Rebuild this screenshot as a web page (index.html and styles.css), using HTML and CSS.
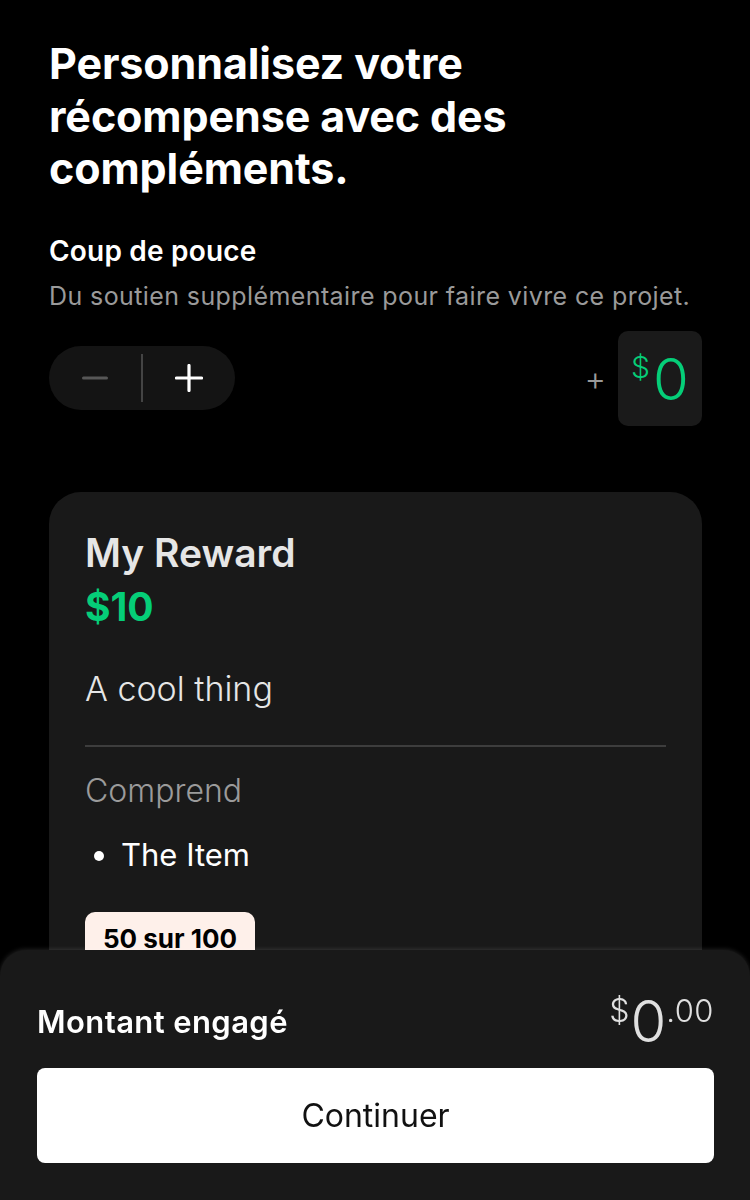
FILE: index.html
```html
<!DOCTYPE html>
<html lang="fr">
<head>
<meta charset="utf-8">
<title>Compléments</title>
<link rel="stylesheet" href="styles.css">
</head>
<body>
<main class="page">
  <h1 class="title">Personnalisez votre récompense avec des compléments.</h1>

  <section class="boost">
    <h2 class="boost-title">Coup de pouce</h2>
    <p class="boost-sub">Du soutien supplémentaire pour faire vivre ce projet.</p>
    <div class="boost-row">
      <div class="stepper">
        <button class="step step-minus" aria-label="moins">
          <svg width="26" height="26" viewBox="0 0 26 26"><path d="M1.5 13h23" stroke="#575757" stroke-width="3" stroke-linecap="round"/></svg>
        </button>
        <span class="step-divider"></span>
        <button class="step step-plus" aria-label="plus">
          <svg width="28" height="28" viewBox="0 0 28 28"><path d="M1.5 14h25M14 1.5v25" stroke="#ffffff" stroke-width="3.2" stroke-linecap="round"/></svg>
        </button>
      </div>
      <div class="amount">
        <span class="amount-plus">+</span>
        <div class="amount-box"><span class="amount-cur">$</span><span class="amount-val">0</span></div>
      </div>
    </div>
  </section>

  <article class="card">
    <h3 class="card-title">My Reward</h3>
    <p class="card-price">$10</p>
    <p class="card-desc">A cool thing</p>
    <hr class="card-rule">
    <p class="card-label">Comprend</p>
    <ul class="card-list">
      <li>The Item</li>
    </ul>
    <span class="badge">50 sur 100</span>
  </article>
</main>

<footer class="sheet">
  <div class="sheet-row">
    <span class="sheet-label">Montant engagé</span>
    <span class="sheet-total"><span class="t-cur">$</span><span class="t-int">0</span><span class="t-dec">.00</span></span>
  </div>
  <button class="cta">Continuer</button>
</footer>
</body>
</html>
```

FILE: styles.css
```css
* { box-sizing: border-box; }

html, body {
  margin: 0;
  padding: 0;
  background: #000;
  height: 100%;
  overflow: hidden;
}

body {
  font-family: Inter, "Noto Sans", "Liberation Sans", sans-serif;
  color: #fff;
}

.page {
  padding: 37px 48px 0 49px;
}

.title {
  margin: 0;
  font-size: 43px;
  line-height: 52.5px;
  font-weight: 700;
  letter-spacing: -0.1px;
  max-width: 560px;
}

.boost { margin-top: 39px; }

.boost-title {
  margin: 0;
  font-size: 28px;
  line-height: 34px;
  font-weight: 600;
  letter-spacing: 0.2px;
}

.boost-sub {
  margin: 13px 0 0;
  font-size: 25px;
  line-height: 30px;
  letter-spacing: 0.4px;
  color: #9a9a9a;
}

.boost-row {
  display: flex;
  justify-content: space-between;
  align-items: center;
  margin-top: 20px;
}

.stepper {
  display: flex;
  align-items: center;
  width: 186px;
  height: 64px;
  border-radius: 32px;
  background: #141414;
}

.step {
  flex: 1;
  height: 100%;
  display: flex;
  align-items: center;
  justify-content: center;
  background: none;
  border: 0;
  padding: 0;
}

.step-divider {
  width: 2px;
  height: 48px;
  background: #444;
}

.amount {
  display: flex;
  align-items: center;
  gap: 12px;
}

.amount-plus {
  font-size: 33px;
  line-height: 40px;
  font-weight: 300;
  color: #9a9a9a;
}

.amount-box {
  width: 84px;
  height: 95px;
  border-radius: 10px;
  background: #1a1a1a;
  display: flex;
  align-items: flex-start;
  justify-content: center;
  padding-top: 19px;
  color: #05ce78;
}

.amount-cur {
  font-size: 30px;
  line-height: 30px;
  font-weight: 300;
  margin-top: 2px;
  margin-right: 3px;
}

.amount-val {
  font-size: 58px;
  line-height: 58px;
  font-weight: 300;
}

.card {
  margin-top: 66px;
  background: #191919;
  border-radius: 32px;
  padding: 38px 36px 60px;
}

.card-title {
  margin: 0;
  font-size: 39px;
  line-height: 46px;
  font-weight: 600;
  color: #e6e6e6;
}

.card-price {
  margin: 8px 0 0;
  font-size: 39px;
  line-height: 46px;
  font-weight: 700;
  color: #05ce78;
}

.card-desc {
  margin: 38px 0 0;
  font-size: 34px;
  line-height: 42px;
  font-weight: 300;
  color: #e6e6e6;
}

.card-rule {
  border: 0;
  height: 2px;
  background: #3d3d3d;
  margin: 35px 0 0;
}

.card-label {
  margin: 24px 0 0;
  font-size: 32px;
  line-height: 40px;
  font-weight: 300;
  color: #9b9b9b;
}

.card-list {
  margin: 24px 0 0;
  padding-left: 36px;
  font-size: 31px;
  line-height: 40px;
  color: #fff;
}

.badge {
  display: inline-block;
  margin-top: 37px;
  padding: 12px 18px;
  border-radius: 10px;
  background: #fef0ea;
  color: #000;
  font-size: 26px;
  line-height: 30px;
  font-weight: 700;
}

.sheet {
  position: fixed;
  left: 0;
  right: 0;
  bottom: 0;
  height: 250px;
  background: #191919;
  border-radius: 26px 26px 0 0;
  box-shadow: 0 -1px 4px rgba(255, 255, 255, 0.12);
  padding: 43px 36px 0 37px;
}

.sheet-row {
  display: flex;
  justify-content: space-between;
  align-items: flex-start;
}

.sheet-label {
  margin-top: 10px;
  font-size: 31px;
  line-height: 38px;
  font-weight: 600;
  letter-spacing: 0.4px;
  color: #fff;
}

.sheet-total {
  display: flex;
  align-items: flex-start;
  color: #e0e0e0;
}

.t-cur {
  margin-top: 3px;
  margin-right: 1px;
  font-size: 32px;
  line-height: 30px;
  font-weight: 300;
}

.t-int {
  font-size: 58px;
  line-height: 56px;
  font-weight: 300;
}

.t-dec {
  margin-top: 3px;
  font-size: 31px;
  line-height: 30px;
  font-weight: 300;
  letter-spacing: 0.5px;
}

.cta {
  display: block;
  width: 100%;
  height: 95px;
  margin-top: 19px;
  border: 0;
  border-radius: 8px;
  background: #fff;
  color: #111;
  font-family: inherit;
  font-size: 32px;
  font-weight: 400;
}
```
